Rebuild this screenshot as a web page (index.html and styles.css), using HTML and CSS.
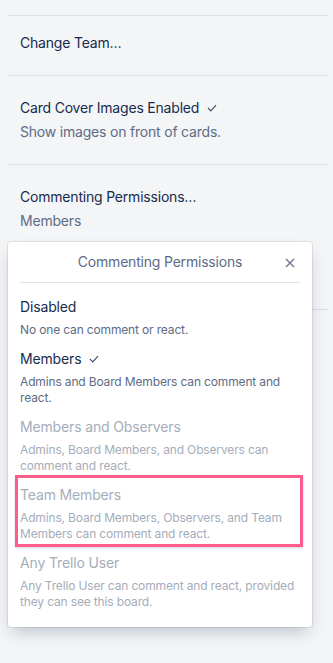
FILE: index.html
```html
<!DOCTYPE html>
<html lang="en">
<head>
  <meta charset="UTF-8" />
  <meta name="viewport" content="width=device-width, initial-scale=1.0"/>
  <title>Board settings</title>
  <link rel="stylesheet" href="styles.css">
</head>
<body>
  <div class="sidebar">
    <ul class="settings">
      <li class="setting setting-first">
        <div class="setting-title">Change Team…</div>
      </li>
      <li class="setting">
        <div class="setting-title">Card Cover Images Enabled
          <svg class="check" width="10" height="8" viewBox="0 0 10 8"><polyline points="1,4 3.8,6.8 9,1.2" /></svg>
        </div>
        <div class="setting-desc">Show images on front of cards.</div>
      </li>
      <li class="setting setting-open">
        <div class="setting-title">Commenting Permissions…</div>
        <div class="setting-desc">Members</div>
      </li>
      <li class="setting">
        <div class="setting-title">Voting Permissions…</div>
        <div class="setting-desc">Members</div>
      </li>
    </ul>

    <!-- popover aberto por cima da lista -->
    <div class="popover">
      <div class="popover-header">
        <span class="popover-title">Commenting Permissions</span>
        <svg class="popover-close" width="10" height="10" viewBox="0 0 10 10"><path d="M1 1 L9 9 M9 1 L1 9" /></svg>
      </div>
      <ul class="options">
        <li class="option">
          <div class="option-title">Disabled</div>
          <div class="option-desc">No one can comment or react.</div>
        </li>
        <li class="option">
          <div class="option-title">Members
            <svg class="check" width="10" height="8" viewBox="0 0 10 8"><polyline points="1,4 3.8,6.8 9,1.2" /></svg>
          </div>
          <div class="option-desc">Admins and Board Members can comment and react.</div>
        </li>
        <li class="option option-disabled">
          <div class="option-title">Members and Observers</div>
          <div class="option-desc">Admins, Board Members, and Observers can comment and react.</div>
        </li>
        <li class="option option-disabled option-highlight">
          <div class="option-title">Team Members</div>
          <div class="option-desc">Admins, Board Members, Observers, and Team Members can comment and react.</div>
        </li>
        <li class="option option-disabled">
          <div class="option-title">Any Trello User</div>
          <div class="option-desc">Any Trello User can comment and react, provided they can see this board.</div>
        </li>
      </ul>
    </div>
  </div>
</body>
</html>
```

FILE: styles.css
```css
body {
  background-color: #f4f5f7;
  font-family: "Inter", "Noto Sans", sans-serif;
  color: #172b4d;
  margin: 0;
  padding: 0;
  height: 663px;
  overflow: hidden;
}

.sidebar {
  position: relative;
  padding-top: 15px;
}

.settings {
  list-style: none;
  margin: 0 4px 0 8px;
  padding: 0;
}

.setting {
  border-top: 1px solid #dcdfe4;
  padding: 22px 12px;
}

.setting-first {
  padding-top: 17px;
}

.setting-open {
  padding-bottom: 78px;
}

.setting-title {
  font-size: 14px;
  line-height: 20px;
  letter-spacing: -0.2px;
}

.setting-desc {
  margin-top: 4px;
  font-size: 14px;
  line-height: 20px;
  letter-spacing: -0.2px;
  color: #5e6c84;
}

.check {
  margin-left: 4px;
  vertical-align: 1px;
}

.check polyline {
  fill: none;
  stroke: #42526e;
  stroke-width: 1.2;
}

.popover {
  position: absolute;
  top: 242px;
  left: 8px;
  width: 280px;
  padding: 0 12px 12px;
  background-color: #fff;
  border-radius: 3px;
  box-shadow: 0 8px 16px -4px rgba(9, 30, 66, 0.25), 0 0 0 1px rgba(9, 30, 66, 0.08);
}

.popover-header {
  position: relative;
  height: 40px;
  border-bottom: 1px solid #dfe1e6;
  text-align: center;
}

.popover-title {
  font-size: 14px;
  line-height: 40px;
  letter-spacing: -0.2px;
  color: #5e6c84;
}

.popover-close {
  position: absolute;
  right: 5px;
  top: 16px;
}

.popover-close path {
  stroke: #6b778c;
  stroke-width: 1.4;
}

.options {
  list-style: none;
  margin: 0;
  padding: 8px 0 0;
}

.option {
  padding: 6px 0 5px;
}

.option-title {
  font-size: 14px;
  line-height: 20px;
  letter-spacing: -0.15px;
}

.option-desc {
  margin-top: 5px;
  font-size: 12px;
  line-height: 16px;
  letter-spacing: -0.15px;
  color: #5e6c84;
}

.option-disabled .option-title,
.option-disabled .option-desc {
  color: #a5adba;
}

.option-highlight {
  position: relative;
}

.option-highlight::after {
  content: "";
  position: absolute;
  top: -4px;
  bottom: 0;
  left: -5px;
  right: -3px;
  border: 3px solid #fb5d8c;
  box-shadow: 0 1px 2px rgba(9, 30, 66, 0.2);
}
```
